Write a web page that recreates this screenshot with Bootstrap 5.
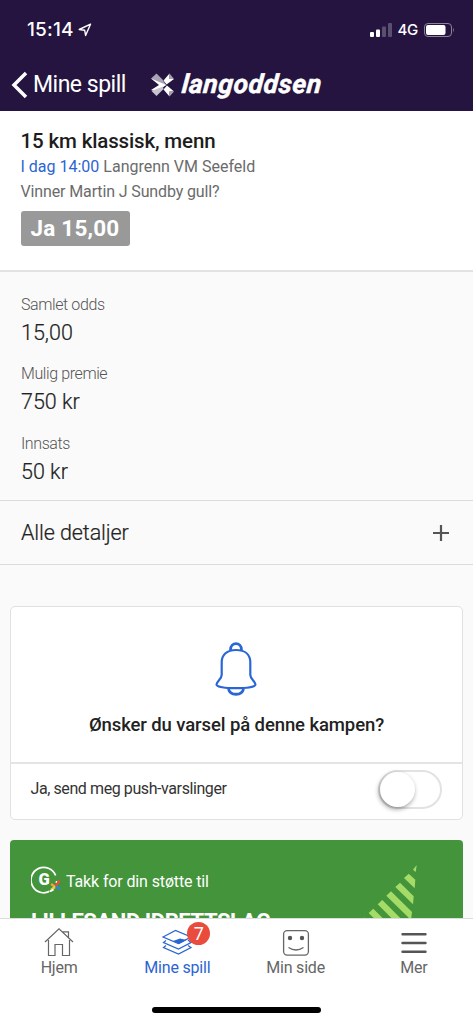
<!DOCTYPE html>
<html lang="no">
<head>
<meta charset="utf-8">
<meta name="viewport" content="width=device-width, initial-scale=1">
<title>Mine spill</title>
<link rel="stylesheet" href="https://cdn.jsdelivr.net/npm/bootstrap@5.3.0/dist/css/bootstrap.min.css">
<style>
body{font-family:Roboto,"Liberation Sans",sans-serif;background:#fafafa;color:#222;font-size:16px;line-height:25px;white-space:nowrap}
svg{display:block;flex:none}
.top-bar{height:111px;background:#24143f;color:#fff}
.status{height:58px;padding:1px 18px 0 27px;font-family:Inter,sans-serif}
.clock{font-size:19px;font-weight:500;letter-spacing:.2px}
.net{font-size:15px;font-weight:500;margin:0 6px 0 6px;letter-spacing:-.3px}
.titles{height:53px;padding-left:11px}
.back{font-size:23px;letter-spacing:-.5px;margin-left:5px;width:118px}
.brand-word{font-size:26.5px;font-weight:700;font-style:italic;margin:-3px 0 0 7px;letter-spacing:.55px;transform:skewX(-5deg);-webkit-text-stroke:.5px #fff}
.event{height:161px;padding:17px 21px 0 20.5px;border-bottom:2px solid #e2e2e2;background:#fff}
.event h1{font-size:20.5px;line-height:26px;font-weight:500;letter-spacing:-.15px;color:#1d1d1d}
.grey{color:#6b6b6b}
.question{letter-spacing:-.13px}
.blue{color:#2b64d3}
.odds{height:35px;font-size:22.5px;line-height:35px;letter-spacing:.2px;padding:0 11px 0 10px;border-radius:3px;background:#999;margin-top:7px}
.sums{height:229px;padding:20px 21px 0;border-bottom:1px solid #dcdcdc}
.sums dt{font-weight:300;color:#555;line-height:26px;letter-spacing:-.4px}
.sums dd{font-size:21.5px;font-weight:300;line-height:30px;margin:0 0 13.3px;-webkit-text-stroke:.2px #222}
.details{height:64px;padding:0 24px 0 21px;font-size:21.5px;font-weight:300;letter-spacing:-.1px;border-bottom:1px solid #dcdcdc;-webkit-text-stroke:.2px #222}
.notify{margin:41px 10px 0;height:214px;border:1.5px solid #e1e1e1;border-radius:5px;background:#fff}
.ask{height:157px;padding-top:34px;border-bottom:2px solid #e4e4e4}
.ask svg{margin-left:-1px}
.ask h2{font-size:18.5px;line-height:26px;font-weight:500;margin-top:15px;letter-spacing:-.1px}
.push{height:50px;padding:0 20px 0 19.500px}
.push-label{letter-spacing:-.41px;margin-top:-1px;color:#333}
.toggle{width:64px;height:39px;border:2px solid #e2e2e2;border-radius:20px}
.knob{width:35px;height:35px;border-radius:50%;background:#fff;box-shadow:-1px 2px 5px #0006}
.club{margin:20px 10px 0;height:160px;border-radius:4px;background:#44943b;color:#fff;padding:26px 21px}
.thanks{letter-spacing:-.13px}
.club h2{font-size:22px;font-weight:700;line-height:30px;margin-top:10px;letter-spacing:-.43px}
.stripes{right:43px;top:18px}
.tabs{height:106px;border-top:1px solid #ddd;background:#fff;color:#666}
.tab{width:118.25px;padding-top:8px;line-height:22px;letter-spacing:-.2px}
.count{left:69px;top:3px;width:23px;height:23px;border-radius:50%;background:#e94b3c;color:#fff;font-size:18px;line-height:23px}
.home-bar{width:169px;height:6px;border-radius:3px;background:#000;bottom:11px;left:152px}
</style>
</head>
<body class="vh-100 d-flex flex-column overflow-hidden">
<header class="top-bar flex-shrink-0">
 <div class="status d-flex align-items-center">
  <span class="clock">15:14</span>
  <svg class="ms-1" width="14" height="14" viewBox="0 0 14 14" fill="none" stroke="#fff" stroke-width="1.4" stroke-linejoin="round"><path d="M12.500 1.200 1.200 6.500 6.700 7.300 7.600 12.500Z"/></svg>
  <svg class="ms-auto" width="22" height="14" viewBox="0 0 22 14" fill="#fff"><rect y="9" width="4" height="5" rx="1"/><rect x="6" y="6.500" width="4" height="7.500" rx="1"/><g opacity=".25"><rect x="12" y="3.500" width="4" height="10.500" rx="1"/><rect x="18" width="4" height="14" rx="1"/></g></svg>
  <span class="net">4G</span>
  <svg width="31" height="14" viewBox="0 0 31 14"><rect x=".5" y=".5" width="27" height="13" rx="3.500" fill="none" stroke="#8b8398"/><rect x="2" y="2" width="19.500" height="10" rx="2" fill="#fff"/><path d="M29 4.500q1.800 2.500 0 5z" fill="#8b8398"/></svg>
 </div>
 <div class="titles d-flex align-items-center">
  <svg width="17" height="28" viewBox="0 0 17 28" fill="none" stroke="#fff" stroke-width="3.500"><path d="M15 2 3 14 15 26"/></svg>
  <span class="back">Mine spill</span>
  <svg width="24" height="24" viewBox="0 0 24 24"><path fill="#aaa3b5" d="M0 5.500 5.500 .5 11.500 6.500 15 12 6 9.500Z"/><path fill="#fff" d="M0 5.500 15.500 12 5 18.500 0 17 8 12Z"/><path fill="#c9c4d0" d="M.5 18 5.500 23 12.500 16 12 13.500Z"/><path fill="#fff" d="M12.500 7.500 18.500 .5V6L23 6 15.500 11.500Z"/><path fill="#aaa3b5" d="M18.500 .5 23 6H18.500Z"/><path fill="#fff" d="M16 12.500 23 18.500H18.500V23.500L12.500 16.500Z"/><path fill="#aaa3b5" d="M18.500 18.500H23L18.500 23.500Z"/></svg>
  <span class="brand-word">langoddsen</span>
 </div>
</header>
<main class="flex-grow-1 overflow-hidden">
 <section class="event">
  <h1 class="m-0">15 km klassisk, menn</h1>
  <div class="grey"><span class="blue">I dag 14:00</span> Langrenn VM Seefeld</div>
  <div class="grey question">Vinner Martin J Sundby gull?</div>
  <div class="odds d-inline-block text-white fw-bold">Ja 15,00</div>
 </section>
 <dl class="sums m-0">
  <dt>Samlet odds</dt><dd>15,00</dd>
  <dt>Mulig premie</dt><dd>750 kr</dd>
  <dt>Innsats</dt><dd>50 kr</dd>
 </dl>
 <div class="details d-flex align-items-center justify-content-between"><span>Alle detaljer</span>
  <svg width="16" height="16" viewBox="0 0 16 16" stroke="#555" stroke-width="2.200"><path d="M0 8H16M8 0V16"/></svg></div>
 <section class="notify">
  <div class="ask d-flex flex-column align-items-center">
   <svg width="42" height="56" viewBox="0 0 42 56" fill="none" stroke="#2b66d5" stroke-width="2.200"><path d="M21 9C12 9 6.700 13.500 6.700 21.500V34C6.700 38 1.500 40.500 1.500 43.500C1.500 46 10 47.200 21 47.200S40.500 46 40.500 43.500C40.500 40.500 35.300 38 35.300 34V21.500C35.300 13.500 30 9 21 9Z"/><path stroke-width="2.800" d="M15.500 9C15.500 .5 26.500 .5 26.500 9M13.500 48C15 55 27 55 28.500 48"/></svg>
   <h2 class="mb-0">Ønsker du varsel på denne kampen?</h2>
  </div>
  <div class="push d-flex align-items-center justify-content-between"><span class="push-label">Ja, send meg push-varslinger</span><div class="toggle"><div class="knob"></div></div></div>
 </section>
 <section class="club position-relative">
  <div class="d-flex align-items-center">
   <svg width="31" height="31" viewBox="0 0 31 31"><path d="M24 22.300A12.500 12.500 0 0 0 25.500 15M24.600 9.500A12.700 12.700 0 1 0 20 24.500" fill="none" stroke="#fff" stroke-width="1.700"/><text x="13.200" y="18.800" text-anchor="middle" font-family="Roboto" font-weight="900" font-size="16.500" fill="#fff">G</text><path d="M18 17H30V28H18Z" fill="#44943b"/><g stroke-width="2.400"><path d="M20 18l4.500 3" stroke="#f0a33a"/><path d="M28.500 14.500l-4 6" stroke="#e5503b"/><path d="M20 24l4.500-3.500" stroke="#e8cf40"/><path d="M24.500 20.500l5 2.500" stroke="#3485d8"/></g><path d="M22.500 23.500A12.700 12.700 0 0 1 18.500 25.500" fill="none" stroke="#fff" stroke-width="1.700"/></svg>
   <span class="thanks ms-1">Takk for din støtte til</span>
  </div>
  <h2 class="mb-0">LILLESAND IDRETTSLAG</h2>
  <svg class="stripes position-absolute" width="70" height="70" viewBox="0 0 70 70" fill="#a4dc67"><path d="M66.700 7 63 11.700 65.700 14Z"/><path d="M58.700 15.700 54 20 64.700 30.300 65.300 21.700Z"/><path d="M50 24.700 45.300 29 63 46.300 63.700 38.300Z"/><path d="M41 33.300 36.300 37.700 61 62 62 54Z"/><path d="M32.300 42 27.700 46.300 51.400 70H60.300Z"/><path d="M23.300 50.700 18.700 55 33.700 70H42.600Z"/><path d="M14.500 59.500 10 63.700 16 70H25Z"/></svg>
 </section>
</main>
<nav class="tabs d-flex flex-shrink-0 position-relative text-center">
 <div class="tab d-flex flex-column align-items-center">
  <svg width="30" height="30" viewBox="0 0 30 30" fill="none" stroke="#666" stroke-width="1.200"><path d="M1 15 15 1.800 29 15M4.500 13V28.500H11V17.500H18.500V28.500H25.500V13M19 5V4.800H24.500V10.500"/></svg><span>Hjem</span></div>
 <div class="tab d-flex flex-column align-items-center position-relative blue">
  <svg width="30" height="30" viewBox="0 0 30 30" fill="none" stroke="#2b64d3" stroke-width="1.200"><path d="M1 10 13.500 3.500 29 10 16.500 16.500ZM4 13.500 1.500 15.500 16.500 22 29 15.500 26 13M4 18.500 1.500 20.500 16.500 27 29 20.500 26 18.500"/><path fill="#2b64d3" stroke="none" d="M11 14 18 11.500 24.500 13 17 17Z"/></svg><span>Mine spill</span>
  <span class="count position-absolute">7</span></div>
 <div class="tab d-flex flex-column align-items-center">
  <svg width="30" height="30" viewBox="0 0 30 30" fill="none" stroke="#666" stroke-width="1.300"><rect x="2.600" y="3.600" width="24.800" height="24.500" rx="3.500"/><path d="M7.500 20.500Q15 25.500 22.500 20.500"/><g fill="#555" stroke="none"><circle cx="9" cy="11" r="2.200"/><circle cx="21" cy="11" r="2.200"/></g></svg><span>Min side</span></div>
 <div class="tab d-flex flex-column align-items-center">
  <svg width="30" height="30" viewBox="0 0 30 30" stroke="#555" stroke-width="2.400" stroke-linecap="round"><path d="M3.500 7.300H26.500M3.500 16H26.500M3.500 24.800H26.500"/></svg><span>Mer</span></div>
 <div class="home-bar position-absolute"></div>
</nav>
<script src="https://cdn.jsdelivr.net/npm/bootstrap@5.3.0/dist/js/bootstrap.bundle.min.js"></script>
</body>
</html>
